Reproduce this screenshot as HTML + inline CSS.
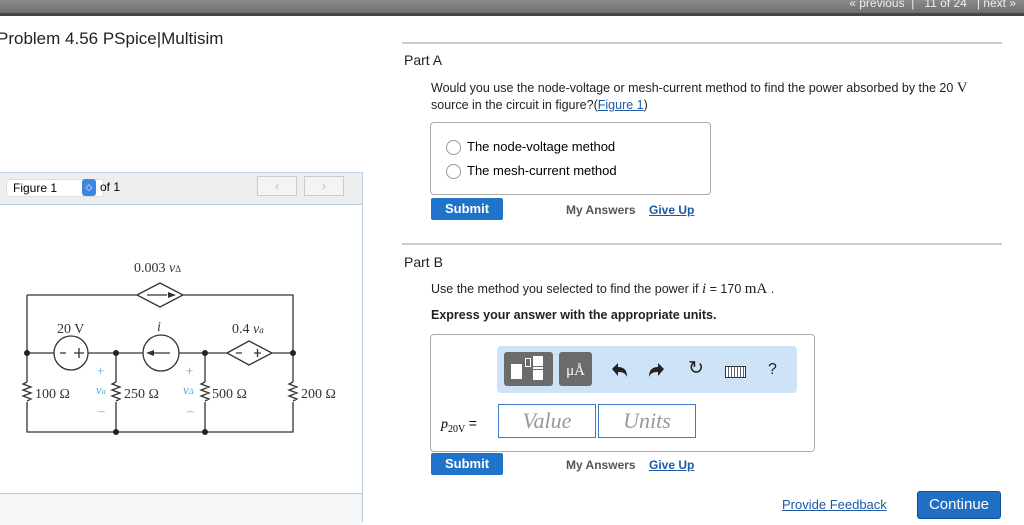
<!DOCTYPE html>
<html><head><style>
body{margin:0;width:1024px;height:524px;overflow:hidden;background:#fff;font-family:"Liberation Sans",sans-serif;position:relative}
.a{position:absolute}
.top{left:0;top:0;width:1024px;height:13px;background:linear-gradient(#8a8a8a,#6e6e6e);border-bottom:3px solid #444}
.btn{background:#1f73c9;color:#fff;font-weight:bold;font-size:13px;border-radius:2px;text-align:center;line-height:22px}
.lnk{color:#1a5aa8;font-weight:bold;font-size:12px;text-decoration:underline}
.gray{color:#555;font-weight:bold;font-size:12px}
.s{font-family:"Liberation Serif",serif}
</style></head><body>
<div class="a top"></div>
<div class="a" style="right:8px;top:-4px;color:#eee;font-size:12px">« previous &nbsp;| &nbsp; 11 of 24 &nbsp; | next »</div>
<div class="a" style="left:-3px;top:29px;font-size:17px;color:#222">Problem 4.56 PSpice|Multisim</div>

<!-- figure panel -->
<div class="a" style="left:0;top:172px;width:362px;height:350px;border-right:1px solid #b8cce0"></div>
<div class="a" style="left:0;top:172px;width:362px;height:31px;background:#eeeeee;border-top:1px solid #c8d8e8;border-bottom:1px solid #b8cce0"></div>
<div class="a" style="left:6px;top:179px;width:90px;height:16px;background:#fff;border:1px solid #ddd;border-radius:3px;font-size:12px;line-height:16px;padding-left:6px">Figure 1</div>
<div class="a" style="left:82px;top:179px;width:14px;height:17px;background:#3d87e0;border-radius:3px;color:#fff;font-size:9px;text-align:center;line-height:17px">◇</div>
<div class="a" style="left:100px;top:180px;font-size:12px">of 1</div>
<div class="a" style="left:257px;top:176px;width:38px;height:18px;border:1px solid #ccc;background:#f4f4f4;color:#bbb;font-size:12px;text-align:center;line-height:18px">‹</div>
<div class="a" style="left:304px;top:176px;width:38px;height:18px;border:1px solid #ccc;background:#f4f4f4;color:#bbb;font-size:12px;text-align:center;line-height:18px">›</div>
<div class="a" style="left:0;top:493px;width:362px;height:31px;background:#f4f6f8;border-top:1px solid #b8cce0"></div>

<svg class="a" style="left:0;top:250px" width="362" height="200" viewBox="0 250 362 200">
<g stroke="#333" stroke-width="1.3" fill="none">
<path d="M27 295H137M183 295H293V382M27 295V382M27 402V432H293V402"/>
<path d="M27 353H54M88 353H143M179 353H227M272 353H293"/>
<path d="M116 353V382M116 402V432M205 353V382M205 402V432"/>
<circle cx="71" cy="353" r="17"/><circle cx="161" cy="353" r="18"/>
<path d="M137 295L160 283L183 295L160 307Z M227 353L249 341L272 353L249 365Z"/>
<path d="M27 382l-4 2l8 3l-8 3l8 3l-8 3l8 3l-4 2M116 382l-4 2l8 3l-8 3l8 3l-8 3l8 3l-4 2M205 382l-4 2l8 3l-8 3l8 3l-8 3l8 3l-4 2M293 382l-4 2l8 3l-8 3l8 3l-8 3l8 3l-4 2"/>
<path d="M60 353h6M74 353h10M79 348v10M236 353h6M254 353h7M257.5 349v8M152 353h18M147 295h20"/>
</g>
<path d="M146 353l8-3v6zM176 295l-8-3v6z" fill="#333"/>
<g fill="#222"><circle cx="27" cy="353" r="3"/><circle cx="116" cy="353" r="3"/><circle cx="205" cy="353" r="3"/><circle cx="293" cy="353" r="3"/><circle cx="116" cy="432" r="3"/><circle cx="205" cy="432" r="3"/></g>
<g class="s" font-size="14" fill="#333" font-family="Liberation Serif,serif">
<text x="134" y="272">0.003 <tspan font-style="italic">v</tspan><tspan font-size="9">Δ</tspan></text>
<text x="57" y="333">20 V</text><text x="157" y="331" font-style="italic">i</text>
<text x="232" y="333">0.4 <tspan font-style="italic">v<tspan font-size="9">a</tspan></tspan></text>
<text x="35" y="398">100 Ω</text><text x="124" y="398">250 Ω</text><text x="212" y="398">500 Ω</text><text x="301" y="398">200 Ω</text>
</g>
<g font-family="Liberation Serif,serif" font-size="13" fill="#4aa8e0">
<text x="97" y="375">+</text><text x="96" y="394" font-style="italic">v<tspan font-size="8">a</tspan></text><text x="98" y="415">–</text>
<text x="186" y="375">+</text><text x="183" y="394" font-style="italic">v<tspan font-size="8">Δ</tspan></text><text x="187" y="415">–</text>
</g>
</svg>

<!-- right side -->
<div class="a" style="left:402px;top:42px;width:600px;height:2px;background:#ccc"></div>
<div class="a" style="left:404px;top:52px;font-size:14px;color:#222">Part A</div>
<div class="a" style="left:431px;top:80px;font-size:12.5px;color:#222;line-height:17px;width:580px">Would you use the node-voltage or mesh-current method to find the power absorbed by the 20 <span class="s" style="font-size:15px">V</span><br>source in the circuit in figure?(<span style="color:#1a5aa8;text-decoration:underline">Figure 1</span>)</div>
<div class="a" style="left:430px;top:122px;width:279px;height:71px;border:1px solid #aaa;border-radius:4px"></div>
<div class="a" style="left:446px;top:140px;width:13px;height:13px;border:1px solid #999;border-radius:50%"></div>
<div class="a" style="left:467px;top:139px;font-size:13px">The node-voltage method</div>
<div class="a" style="left:446px;top:164px;width:13px;height:13px;border:1px solid #999;border-radius:50%"></div>
<div class="a" style="left:467px;top:163px;font-size:13px">The mesh-current method</div>
<div class="a btn" style="left:431px;top:198px;width:72px">Submit</div>
<div class="a gray" style="left:566px;top:203px">My Answers</div>
<div class="a lnk" style="left:649px;top:203px">Give Up</div>

<div class="a" style="left:402px;top:243px;width:600px;height:2px;background:#ccc"></div>
<div class="a" style="left:404px;top:254px;font-size:14px;color:#222">Part B</div>
<div class="a" style="left:431px;top:281px;font-size:12.5px;color:#222">Use the method you selected to find the power if <i class="s" style="font-size:15px">i</i> = 170 <span class="s" style="font-size:15px">mA</span> .</div>
<div class="a" style="left:431px;top:308px;font-size:12.5px;font-weight:bold;color:#222">Express your answer with the appropriate units.</div>
<div class="a" style="left:430px;top:334px;width:383px;height:116px;border:1px solid #aaa;border-radius:4px"></div>
<div class="a" style="left:497px;top:346px;width:300px;height:47px;background:#cfe3f8;border-radius:4px"></div>
<div class="a" style="left:504px;top:352px;width:49px;height:34px;background:#6b6b6b;border-radius:3px"></div>
<div class="a" style="left:511px;top:364px;width:11px;height:15px;background:#fff"></div>
<div class="a" style="left:525px;top:358px;width:4px;height:7px;border:1px solid #fff"></div>
<div class="a" style="left:533px;top:356px;width:10px;height:10px;background:#fff"></div>
<div class="a" style="left:533px;top:367px;width:10px;height:1.5px;background:#fff"></div>
<div class="a" style="left:533px;top:370px;width:10px;height:10px;background:#fff"></div>
<div class="a s" style="left:559px;top:352px;width:33px;height:34px;background:#6b6b6b;border-radius:3px;color:#fff;font-size:15px;text-align:center;line-height:38px">μÅ</div>
<svg class="a" style="left:608px;top:360px" width="60" height="20"><path d="M4 9l6-6v4c6 0 9 3 9 10c-2-4-4-5-9-5v4z" fill="#222"/><path d="M56 9l-6-6v4c-6 0-9 3-9 10c2-4 4-5 9-5v4z" fill="#222"/></svg>
<div class="a" style="left:688px;top:357px;font-size:19px;color:#222">↻</div>
<div class="a" style="left:725px;top:366px;width:19px;height:10px;border:1px solid #333;background:repeating-linear-gradient(90deg,#fff 0 2px,#666 2px 3px)"></div>
<div class="a" style="left:768px;top:361px;font-size:16px;color:#222">?</div>
<div class="a s" style="left:441px;top:415px;font-size:14px;font-style:italic">p<sub style="font-size:10px;font-style:normal">20V</sub> <span style="font-style:normal;font-family:'Liberation Sans'">=</span></div>
<div class="a s" style="left:498px;top:404px;width:96px;height:32px;border:1px solid #3f77c8;color:#999;font-style:italic;font-size:22px;text-align:center;line-height:32px">Value</div>
<div class="a s" style="left:598px;top:404px;width:96px;height:32px;border:1px solid #3f77c8;color:#999;font-style:italic;font-size:22px;text-align:center;line-height:32px">Units</div>
<div class="a btn" style="left:431px;top:453px;width:72px">Submit</div>
<div class="a gray" style="left:566px;top:458px">My Answers</div>
<div class="a lnk" style="left:649px;top:458px">Give Up</div>
<div class="a" style="left:782px;top:497px;font-size:13px;color:#1a5aa8;text-decoration:underline">Provide Feedback</div>
<div class="a" style="left:917px;top:491px;width:82px;height:26px;background:#1f6fc4;border:1px solid #0d4f99;border-radius:3px;color:#fff;font-size:15px;text-align:center;line-height:26px">Continue</div>
</body></html>
